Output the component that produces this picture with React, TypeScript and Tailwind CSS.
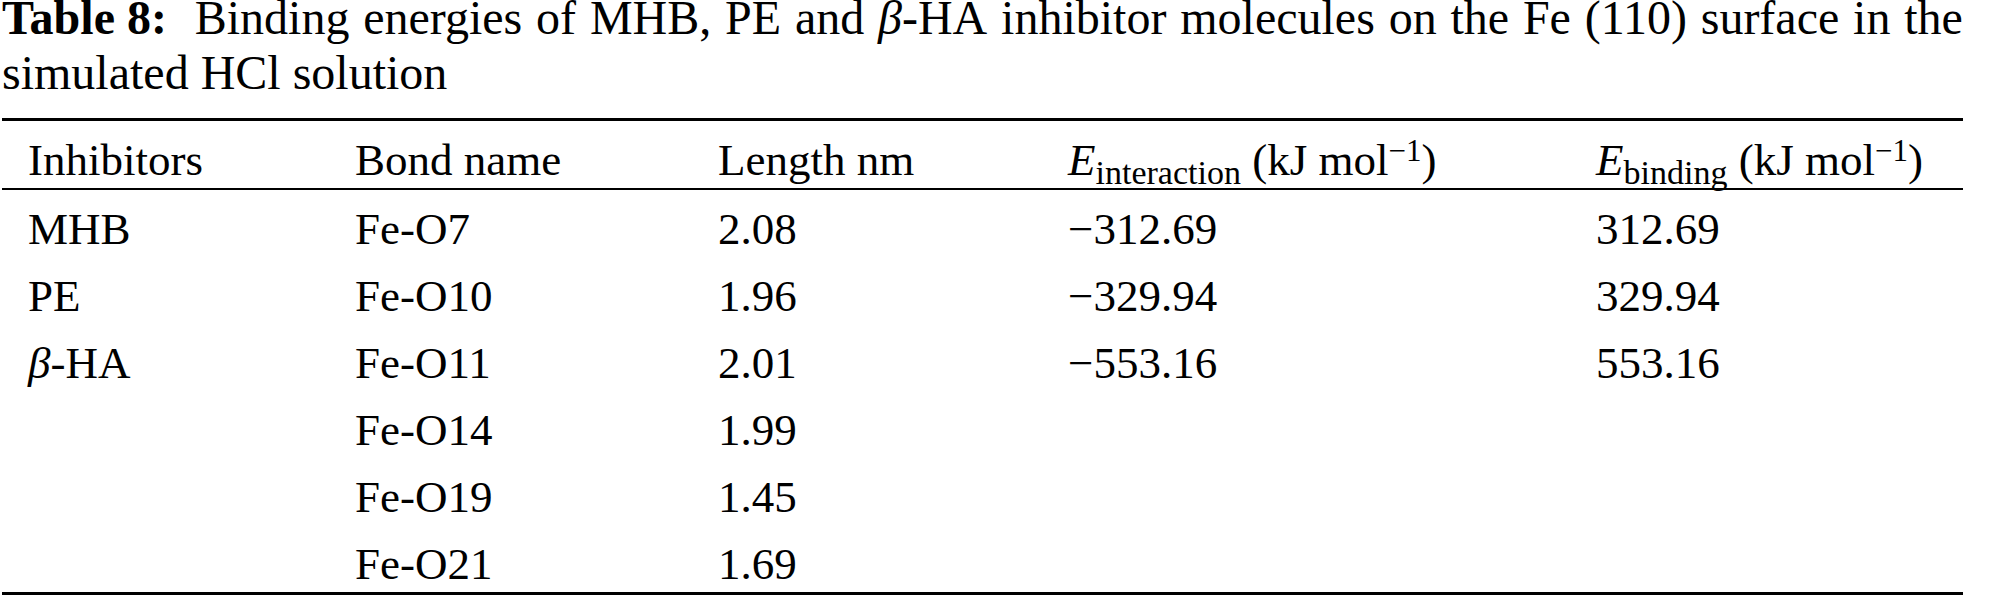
const rows = [
  { inhibitor: 'MHB', bond: 'Fe-O7', length: '2.08', inter: '−312.69', bind: '312.69' },
  { inhibitor: 'PE', bond: 'Fe-O10', length: '1.96', inter: '−329.94', bind: '329.94' },
  { inhibitor: 'beta', bond: 'Fe-O11', length: '2.01', inter: '−553.16', bind: '553.16' },
  { inhibitor: '', bond: 'Fe-O14', length: '1.99', inter: '', bind: '' },
  { inhibitor: '', bond: 'Fe-O19', length: '1.45', inter: '', bind: '' },
  { inhibitor: '', bond: 'Fe-O21', length: '1.69', inter: '', bind: '' },
];

const cols = 'grid grid-cols-[327px_363px_350px_528px_1fr] pl-[26px]';

const Unit = () => (
  <>
    {' '}(kJ mol<sup className="relative -top-[14px] text-[31px] leading-none align-baseline">−1</sup>)
  </>
);

const titleWords = 'Binding energies of MHB, PE and'.split(' ');
const titleRest = 'inhibitor molecules on the Fe (110) surface in the'.split(' ');

const App = () => {
  return (
    <div className="w-[2001px] h-[598px] overflow-hidden bg-white text-black font-['Liberation_Serif',serif]">
      <div className="w-[1961px] ml-[2px]">
        <div className="text-[48px]">
          <div className="flex justify-between whitespace-nowrap leading-[34px] pt-[1px]">
            <span className="mr-[14px]"><b>Table 8:</b></span>
            {titleWords.map((w) => (
              <span key={w}>{w}</span>
            ))}
            <span><i>β</i>-HA</span>
            {titleRest.map((w, i) => (
              <span key={w + i}>{w}</span>
            ))}
          </div>
          <div className="leading-[55px] mt-[10px]">simulated HCl solution</div>
        </div>

        <div className="mt-[18px] border-t-[3px] border-black text-[45px] leading-[50px]">
          <div className={`${cols} pt-[14px] pb-[3px] border-b-2 border-black`}>
            <div>Inhibitors</div>
            <div>Bond name</div>
            <div>Length nm</div>
            <div className="whitespace-nowrap">
              <i>E</i><sub className="text-[34px]">interaction</sub><Unit />
            </div>
            <div className="whitespace-nowrap">
              <i>E</i><sub className="text-[34px]">binding</sub><Unit />
            </div>
          </div>
          {rows.map((r) => (
            <div key={r.bond} className={`${cols} pt-[14px] pb-[3px]`}>
              <div>{r.inhibitor === 'beta' ? <><i>β</i>-HA</> : r.inhibitor}</div>
              <div>{r.bond}</div>
              <div>{r.length}</div>
              <div>{r.inter}</div>
              <div>{r.bind}</div>
            </div>
          ))}
          <div className="border-t-[3px] border-black" />
        </div>
      </div>
    </div>
  );
};

export default App;
